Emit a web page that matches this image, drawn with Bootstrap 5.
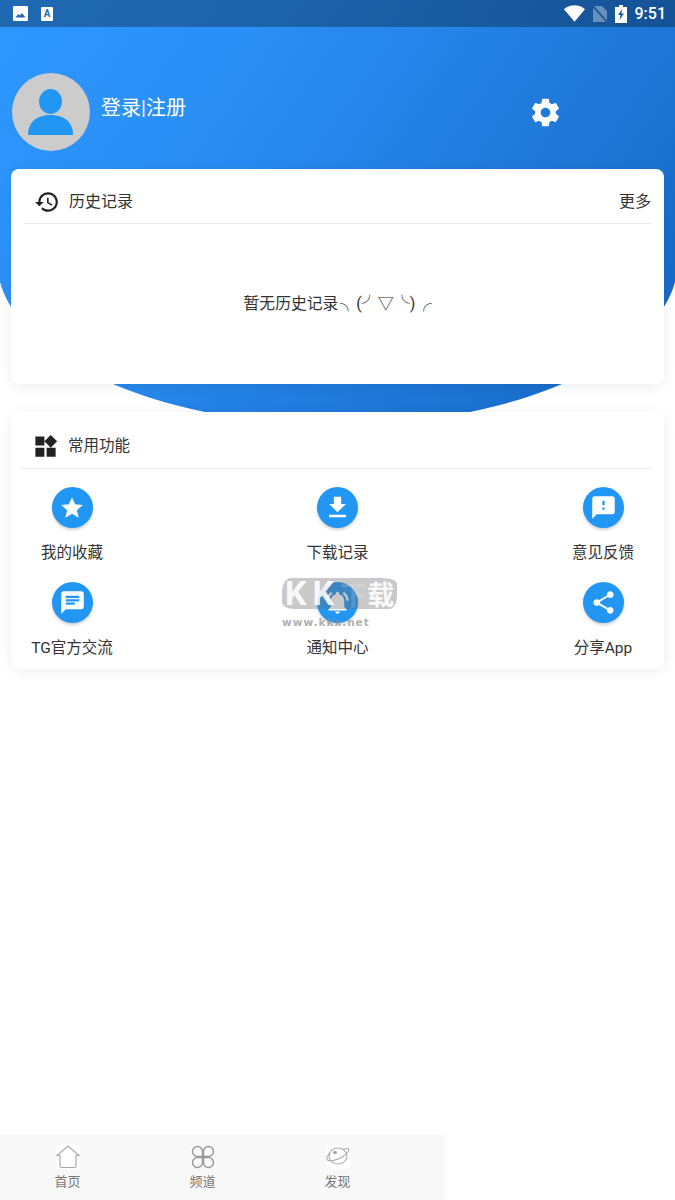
<!DOCTYPE html>
<html lang="zh-CN">
<head>
  <meta charset="UTF-8" />
  <meta name="viewport" content="width=device-width, initial-scale=1" />
  <title>我的</title>
  <link href="https://cdn.jsdelivr.net/npm/bootstrap@5.3.0/dist/css/bootstrap.min.css" rel="stylesheet" />
  <style>
    body {
      font-family: Roboto, "Noto Sans CJK SC", sans-serif;
      color: #333;
      background: #fff;
    }

    .page-wrap {
      height: 1200px;
      overflow: hidden;
    }

    /* blue ellipse behind the top of the page */
    .hero-bg {
      position: absolute;
      top: 0;
      left: -3px;
      width: 681px;
      height: 425px;
      background: linear-gradient(125deg, #2d98ff 0%, #2a8ef5 30%, #1565c0 100%);
      border-radius: 0 0 341px 341px / 0 0 165px 165px;
    }

    .page-content {
      position: relative;
    }

    .status-bar {
      height: 27px;
      padding: 0 9px 0 13px;
      background: rgba(0, 0, 0, .3);
    }

    .status-time {
      font-size: 16px;
      font-weight: 500;
      color: #fff;
      margin-left: 8px;
    }

    .note-a {
      width: 12px;
      height: 14px;
      margin-left: 13px;
      background: #fff;
      border-radius: 1px;
      color: #1f66b3;
      font-size: 10px;
      font-weight: 700;
      line-height: 13px;
      text-align: center;
    }

    .profile-row {
      padding: 46px 113px 18px 12px;
      height: 142px;
    }

    .avatar-img {
      width: 78px;
      height: 78px;
      border-radius: 50%;
      background: #ccc;
    }

    .login-text {
      font-size: 20px;
      color: #fff;
      margin-left: 11px;
      margin-bottom: 9px;
    }

    .gear-icon {
      margin-bottom: -1px;
    }

    .panel-card {
      margin: 0 11px;
      border: 0;
      border-radius: 8px;
      box-shadow: 0 2px 14px rgba(0, 0, 0, .07);
    }

    .history-card {
      height: 215px;
    }

    .tools-card {
      margin-top: 28px;
      height: 257px;
    }

    .panel-head {
      border-bottom: 1px solid #e9e9e9;
      font-size: 16px;
      padding-top: 11px;
    }

    .head-label {
      margin-left: 9px;
    }

    .history-head {
      height: 55px;
      margin: 0 13px 0 13px;
      padding-left: 10px;
    }

    .tools-head {
      height: 57px;
      margin: 0 12px 0 11px;
      padding-left: 10px;
      padding-top: 13px;
      font-size: 15.5px;
    }

    .empty-text {
      font-size: 16px;
    }

    .empty-words {
      font-size: 15.8px;
      margin-right: 2px;
    }

    .tool-rows {
      padding: 18px 11px 0;
      row-gap: 18px;
    }

    .tool-item {
      width: 100px;
      font-size: 15.5px;
      line-height: 22px;
      white-space: nowrap;
    }

    .tool-dot {
      width: 41px;
      height: 41px;
      border-radius: 50%;
      background: #2196f3;
      box-shadow: 0 2px 3px rgba(0, 0, 0, .18);
      margin-bottom: 14px;
    }

    .tab-bar {
      width: 450px;
      height: 65px;
      background: linear-gradient(to right, #f8f8f8 98%, #fff 100%);
    }

    .tab-item {
      width: 135px;
      padding-top: 10px;
      font-size: 13px;
      line-height: 18px;
      color: #777;
    }

    .tab-icon {
      width: 24px;
      height: 24px;
      margin-bottom: 4px;
    }

    .tab-white {
      background: #fff;
    }

    /* site watermark over the bell */
    .mark-box {
      position: absolute;
      top: 578px;
      left: 282px;
      width: 115px;
      font-weight: 700;
      pointer-events: none;
    }

    .mark-big {
      height: 31px;
      padding-left: 3px;
      font-size: 27px;
      line-height: 31px;
      white-space: nowrap;
      color: rgba(255, 255, 255, .9);
      background: rgba(105, 105, 105, .36);
      border-radius: 9px 14px 8px 12px / 14px 6px 12px 7px;
    }

    .mark-kk {
      font-size: 34px;
      letter-spacing: 6px;
    }

    .mark-faint {
      color: rgba(255, 255, 255, .18);
    }

    .mark-url {
      font-family: "DejaVu Sans", sans-serif;
      font-size: 10.5px;
      line-height: 12px;
      margin-top: 7px;
      color: rgba(140, 140, 140, .7);
      letter-spacing: 1px;
    }
  </style>
</head>
<body>
  <div class="page-wrap position-relative d-flex flex-column">
    <div class="hero-bg"></div>

    <div class="page-content flex-grow-1">
      <!-- Status bar -->
      <div class="status-bar d-flex align-items-center">
        <svg width="15" height="15" viewBox="0 0 15 15"><rect width="15" height="15" rx="1" fill="#fff"/><path d="M2.500 11.500l3-3.500 1.500 1.500 2-2.500 3.500 4.500z" fill="#1f66b3"/></svg>
        <div class="note-a">A</div>
        <div class="ms-auto d-flex align-items-center">
          <svg width="21" height="17" viewBox="0 0 24 19"><path d="M12 19L24 4.500C23.500 4.100 19 0 12 0S.5 4.100 0 4.500z" fill="#fff"/></svg>
          <svg class="ms-2" width="14" height="16" viewBox="0 0 14 16"><path d="M0 0h9l5 5v11H0z" fill="#fff" opacity=".35"/><path d="M0 0l14 16" stroke="#174f90" stroke-width="1.500"/></svg>
          <svg class="ms-2" width="12" height="18" viewBox="0 0 12 18"><path d="M4 0h4v2h4v16H0V2h4z" fill="#fff"/><path d="M7 4L3 10h2.500L4.500 15 9 8.500H6.500z" fill="#1a5ca6"/></svg>
          <span class="status-time">9:51</span>
        </div>
      </div>

      <!-- Profile -->
      <div class="profile-row d-flex align-items-center">
        <div class="avatar-img flex-shrink-0">
          <svg width="78" height="78" viewBox="0 0 78 78"><ellipse cx="38.500" cy="28.500" rx="11.500" ry="12.500" fill="#2196f3"/><path d="M16 62c0-14 10-20 22.500-20S61 48 61 62z" fill="#2196f3"/></svg>
        </div>
        <div class="login-text">登录|注册</div>
        <svg class="gear-icon ms-auto" width="33" height="33" viewBox="0 0 24 24" fill="#fff"><path d="M19.430 12.980c.04-.32.07-.64.07-.98s-.03-.66-.07-.98l2.110-1.650c.19-.15.24-.42.12-.64l-2-3.460c-.12-.22-.39-.3-.61-.22l-2.490 1c-.52-.4-1.080-.73-1.690-.98l-.38-2.650C14.460 2.180 14.250 2 14 2h-4c-.25 0-.46.18-.49.42l-.38 2.650c-.61.25-1.170.59-1.690.98l-2.490-1c-.23-.09-.49 0-.61.22l-2 3.460c-.13.22-.07.49.12.64l2.110 1.650c-.04.32-.07.65-.07.98s.03.66.07.98l-2.110 1.650c-.19.15-.24.42-.12.64l2 3.460c.12.22.39.3.61.22l2.490-1c.52.4 1.080.73 1.690.98l.38 2.650c.03.24.24.42.49.42h4c.25 0 .46-.18.49-.42l.38-2.650c.61-.25 1.170-.59 1.690-.98l2.490 1c.23.09.49 0 .61-.22l2-3.460c.12-.22.07-.49-.12-.64l-2.110-1.650zM12 15.500c-1.930 0-3.500-1.570-3.500-3.500s1.570-3.500 3.500-3.500 3.500 1.570 3.500 3.500-1.570 3.500-3.500 3.500z"/></svg>
      </div>

      <!-- History -->
      <div class="card panel-card history-card">
        <div class="panel-head history-head d-flex align-items-center flex-shrink-0">
          <svg width="26" height="26" viewBox="0 0 24 24" fill="#222"><path d="M13 3c-4.970 0-9 4.030-9 9H1l3.890 3.890.07.14L9 12H6c0-3.870 3.130-7 7-7s7 3.130 7 7-3.130 7-7 7c-1.930 0-3.680-.79-4.940-2.060l-1.420 1.420C8.270 19.990 10.510 21 13 21c4.970 0 9-4.030 9-9s-4.030-9-9-9zm-1 5v5l4.280 2.540.72-1.210-3.500-2.080V8H12z"/></svg>
          <span class="head-label">历史记录</span>
          <span class="ms-auto">更多</span>
        </div>
        <div class="empty-text flex-grow-1 d-flex align-items-center justify-content-center"><span class="empty-words">暂无历史记录</span>╮(╯▽╰)╭</div>
      </div>

      <!-- Tools -->
      <div class="card panel-card tools-card">
        <div class="panel-head tools-head d-flex align-items-center flex-shrink-0">
          <svg width="27" height="27" viewBox="0 0 24 24" fill="#222"><path d="M13 13v8h8v-8h-8zM3 21h8v-8H3v8zM3 3v8h8V3H3zm13.660-1.310L11 7.340 16.660 13l5.660-5.660-5.660-5.650z"/></svg>
          <span class="head-label">常用功能</span>
        </div>
        <div class="tool-rows d-flex flex-column">
          <div class="d-flex justify-content-between">
            <div class="tool-item d-flex flex-column align-items-center">
              <div class="tool-dot d-flex align-items-center justify-content-center"><svg width="26" height="26" viewBox="0 0 24 24" fill="#fff"><path d="M12 17.270L18.180 21l-1.640-7.030L22 9.240l-7.190-.61L12 2 9.190 8.630 2 9.240l5.460 4.730L5.820 21z"/></svg></div>
              我的收藏
            </div>
            <div class="tool-item d-flex flex-column align-items-center">
              <div class="tool-dot d-flex align-items-center justify-content-center"><svg width="29" height="29" viewBox="0 0 24 24" fill="#fff"><path d="M19 9h-4V3H9v6H5l7 7 7-7zM5 18v2h14v-2H5z"/></svg></div>
              下载记录
            </div>
            <div class="tool-item d-flex flex-column align-items-center">
              <div class="tool-dot d-flex align-items-center justify-content-center"><svg width="27" height="27" viewBox="0 0 24 24" fill="#fff"><path d="M20 2H4c-1.100 0-1.990.9-1.990 2L2 22l4-4h14c1.100 0 2-.9 2-2V4c0-1.100-.9-2-2-2zm-7 12h-2v-2h2v2zm0-4h-2V6h2v4z"/></svg></div>
              意见反馈
            </div>
          </div>
          <div class="d-flex justify-content-between">
            <div class="tool-item d-flex flex-column align-items-center">
              <div class="tool-dot d-flex align-items-center justify-content-center"><svg width="27" height="27" viewBox="0 0 24 24" fill="#fff"><path d="M20 2H4c-1.100 0-1.990.9-1.990 2L2 22l4-4h14c1.100 0 2-.9 2-2V4c0-1.100-.9-2-2-2zM6 9h12v2H6V9zm8 5H6v-2h8v2zm4-6H6V6h12v2z"/></svg></div>
              TG官方交流
            </div>
            <div class="tool-item d-flex flex-column align-items-center">
              <div class="tool-dot d-flex align-items-center justify-content-center"><svg width="27" height="27" viewBox="0 0 24 24" fill="#fff"><path d="M7.580 4.080L6.150 2.650C3.750 4.480 2.170 7.300 2.030 10.500h2c.15-2.650 1.510-4.970 3.550-6.420zm12.390 6.420h2c-.15-3.200-1.730-6.020-4.120-7.850l-1.420 1.430c2.020 1.450 3.390 3.770 3.540 6.420zM18 11c0-3.070-1.640-5.640-4.500-6.320V4c0-.83-.67-1.500-1.500-1.500s-1.500.67-1.500 1.500v.68C7.630 5.360 6 7.920 6 11v5l-2 2v1h16v-1l-2-2v-5zm-6 11c.14 0 .27-.01.4-.04.65-.14 1.180-.58 1.440-1.180.1-.24.15-.5.15-.78h-4c.01 1.100.9 2 2.010 2z"/></svg></div>
              通知中心
            </div>
            <div class="tool-item d-flex flex-column align-items-center">
              <div class="tool-dot d-flex align-items-center justify-content-center"><svg width="27" height="27" viewBox="0 0 24 24" fill="#fff"><path d="M18 16.080c-.76 0-1.440.3-1.960.77L8.910 12.700c.05-.23.09-.46.09-.7s-.04-.47-.09-.7l7.050-4.110c.54.5 1.250.81 2.040.81 1.660 0 3-1.340 3-3s-1.340-3-3-3-3 1.340-3 3c0 .24.04.47.09.7L8.040 9.810C7.500 9.310 6.790 9 6 9c-1.660 0-3 1.340-3 3s1.340 3 3 3c.79 0 1.500-.31 2.040-.81l7.120 4.160c-.05.21-.08.43-.08.65 0 1.610 1.310 2.920 2.920 2.920 1.610 0 2.920-1.310 2.920-2.920s-1.310-2.920-2.920-2.920z"/></svg></div>
              分享App
            </div>
          </div>
        </div>
      </div>
    </div>

    <!-- Watermark -->
    <div class="mark-box">
      <div class="mark-big"><span class="mark-kk">KK</span><span class="mark-faint">下</span>载</div>
      <div class="mark-url">www.kkx.net</div>
    </div>

    <!-- Tabs -->
    <div class="tab-bar position-relative d-flex flex-shrink-0">
      <div class="tab-item d-flex flex-column align-items-center">
        <svg class="tab-icon tab-white" viewBox="0 0 24 24" fill="none" stroke="#aaa" stroke-width="1.200"><path d="M1 10.500L12 1l11 9.500h-3V21a1.500 1.500 0 0 1-1.500 1.500h-13A1.500 1.500 0 0 1 4 21V10.500z"/></svg>
        首页
      </div>
      <div class="tab-item d-flex flex-column align-items-center">
        <svg class="tab-icon" viewBox="0 0 24 24" fill="none" stroke="#999" stroke-width="1.400"><path d="M11.500 11.500H6.500a5 5 0 1 1 5-5zM12.500 11.500h5a5 5 0 1 0-5-5zM11.500 12.500H6.500a5 5 0 1 0 5 5zM12.500 12.500h5a5 5 0 1 1-5 5z"/></svg>
        频道
      </div>
      <div class="tab-item d-flex flex-column align-items-center">
        <svg class="tab-icon tab-white" viewBox="0 0 24 24" fill="none" stroke="#aaa" stroke-width="1.100"><ellipse cx="12" cy="11" rx="9" ry="8"/><path d="M4 7.500C1 11 .5 14 1.500 15c2 2 10.500 0 15.500-3.500S23.500 5 22.500 4c-1-1-3.500-.5-6 .5"/><circle cx="9" cy="7.500" r="1.300" fill="#999"/></svg>
        发现
      </div>
    </div>
  </div>

  <script src="https://cdn.jsdelivr.net/npm/bootstrap@5.3.0/dist/js/bootstrap.bundle.min.js"></script>
</body>
</html>
